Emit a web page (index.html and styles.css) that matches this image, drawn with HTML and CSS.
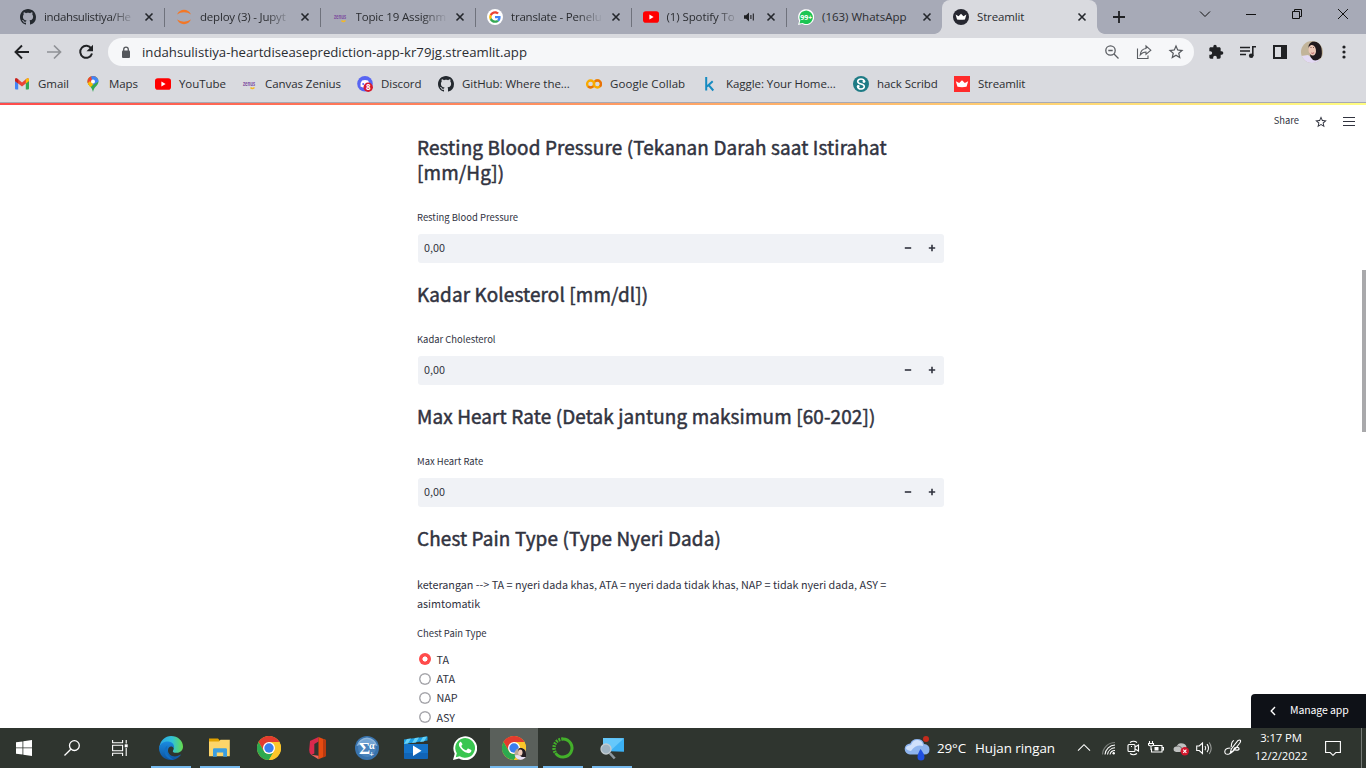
FILE: index.html
```html
<!DOCTYPE html>
<html lang="id">
<head>
<meta charset="utf-8">
<title>Streamlit</title>
<link rel="stylesheet" href="styles.css">
</head>
<body>
<svg class="defs" aria-hidden="true">
  <defs>
    <symbol id="github" viewBox="0 0 16 16"><path fill="#24292f" d="M8 0C3.58 0 0 3.58 0 8c0 3.54 2.29 6.53 5.47 7.59.4.07.55-.17.55-.38 0-.19-.01-.82-.01-1.49-2.01.37-2.53-.49-2.69-.94-.09-.23-.48-.94-.82-1.13-.28-.15-.68-.52-.01-.53.63-.01 1.08.58 1.23.82.72 1.21 1.87.87 2.33.66.07-.52.28-.87.51-1.07-1.78-.2-3.64-.89-3.64-3.95 0-.87.31-1.59.82-2.15-.08-.2-.36-1.02.08-2.12 0 0 .67-.21 2.2.82.64-.18 1.32-.27 2-.27s1.36.09 2 .27c1.53-1.04 2.2-.82 2.2-.82.44 1.1.16 1.92.08 2.12.51.56.82 1.27.82 2.15 0 3.07-1.87 3.75-3.65 3.95.29.25.54.73.54 1.48 0 1.07-.01 1.93-.01 2.2 0 .21.15.46.55.38A8.01 8.01 0 0 0 16 8c0-4.42-3.58-8-8-8z"/></symbol>
    <symbol id="zenius" viewBox="0 0 16 16"><text x="2" y="9.8" font-family="Open Sans, sans-serif" font-size="7.6" font-weight="700" textLength="12" lengthAdjust="spacingAndGlyphs" fill="#7d4f9f">zenus</text><path d="M9.500 11.500q1.700 2 4 0" fill="none" stroke="#f5b823" stroke-width="1.500"/></symbol>
    <symbol id="youtube" viewBox="0 0 16 16"><rect y="2.300" width="16" height="11.400" rx="2.800" fill="#f00"/><path d="M6.400 5.600v4.800L10.600 8z" fill="#fff"/></symbol>
    <symbol id="close" viewBox="0 0 10 10"><path d="M1.500 1.500l7 7M8.500 1.500l-7 7" stroke="#24272c" stroke-width="1.600" fill="none"/></symbol>
    <symbol id="crown" viewBox="0 0 16 16"><path d="M1.800 5.200L5.200 7 8 4.200 10.800 7l3.400-1.800-1.700 5.600q-4.500.9-9 0z"/></symbol>
    <symbol id="star" viewBox="0 0 24 24"><path d="M22 9.240l-7.190-.62L12 2 9.190 8.630 2 9.240l5.460 4.730L5.820 21 12 17.270 18.180 21l-1.630-7.030L22 9.240zM12 15.400l-3.760 2.270 1-4.280-3.320-2.880 4.380-.38L12 6.100l1.710 4.040 4.380.38-3.320 2.880 1 4.280L12 15.400z"/></symbol>
    <symbol id="chrome" viewBox="0 0 24 24"><circle cx="12" cy="12" r="12" fill="#fcc629"/><path d="M1.600 6A12 12 0 0 1 22.400 6H12l-5.200 9z" fill="#e33b2e"/><path d="M1.600 6l5.200 9c1 1.800 3 3 5.200 3 1.900 0 3.900-.8 5.200-3L12 24A12 12 0 0 1 1.600 6z" fill="#2da94f"/><path d="M12 24l5.200-9c1-2 1-4.200-.2-6.100L15.600 6h6.800A12 12 0 0 1 12 24z" fill="#fcc629"/><circle cx="12" cy="12" r="6" fill="#fff"/><circle cx="12" cy="12" r="4.700" fill="#3a7ded"/></symbol>
  </defs>
</svg>

<div class="browser">
  <div class="tabstrip">
    <div class="tabs">
      <div class="tab"><svg class="fav"><use href="#github"/></svg><span class="tab-title fade t-ind">indahsulistiya/He</span><svg class="x"><use href="#close"/></svg></div>
      <div class="tab"><svg class="fav" viewBox="0 0 16 16"><path d="M1 5.400Q3.500.8 8 .8T15 5.400Q12 3.300 8 3.300T1 5.400zM1 10.600Q3.500 15.200 8 15.200t7-4.600Q12 12.700 8 12.700T1 10.600z" fill="#f37726"/></svg><span class="tab-title fade t-dep">deploy (3) - Jupyt</span><svg class="x"><use href="#close"/></svg></div>
      <div class="tab"><svg class="fav"><use href="#zenius"/></svg><span class="tab-title fade t-top">Topic 19 Assignm</span><svg class="x"><use href="#close"/></svg></div>
      <div class="tab"><svg class="fav" viewBox="0 0 48 48"><circle cx="24" cy="24" r="24" fill="#fff"/><g transform="translate(6.500 6.500) scale(.73)"><path fill="#EA4335" d="M24 9.500c3.540 0 6.710 1.220 9.210 3.600l6.850-6.850C35.900 2.380 30.470 0 24 0 14.620 0 6.510 5.380 2.560 13.220l7.980 6.190C12.430 13.720 17.740 9.500 24 9.500z"/><path fill="#4285F4" d="M46.980 24.550c0-1.570-.15-3.090-.38-4.550H24v9.020h12.940c-.58 2.960-2.260 5.480-4.780 7.180l7.730 6c4.510-4.180 7.090-10.360 7.090-17.650z"/><path fill="#FBBC05" d="M10.530 28.590c-.48-1.450-.76-2.990-.76-4.590s.27-3.140.76-4.590l-7.980-6.190C.92 16.460 0 20.120 0 24c0 3.880.92 7.540 2.560 10.780l7.970-6.190z"/><path fill="#34A853" d="M24 48c6.480 0 11.930-2.130 15.890-5.810l-7.730-6c-2.150 1.450-4.920 2.300-8.160 2.300-6.260 0-11.570-4.220-13.470-9.910l-7.980 6.190C6.510 42.620 14.620 48 24 48z"/></g></svg><span class="tab-title fade t-tra">translate - Penelu</span><svg class="x"><use href="#close"/></svg></div>
      <div class="tab"><svg class="fav"><use href="#youtube"/></svg><span class="tab-title short fade">(1) Spotify To</span><svg class="speaker" viewBox="0 0 11 10"><path d="M0 3.200h2L5 .5v9L2 6.800H0z" fill="#202124"/><path d="M6.900 3v4M9.300 1.500v7" stroke="#202124" stroke-width="1.100" fill="none"/></svg><svg class="x"><use href="#close"/></svg></div>
      <div class="tab"><svg class="fav" viewBox="0 0 16 16"><path d="M0 16l1.100-4A8 8 0 1 1 4 15z" fill="#fff"/><path d="M1.500 14.500l.8-3A6.700 6.700 0 1 1 4.700 14z" fill="#1cc553"/><text x="2.200" y="10.800" font-family="Open Sans, sans-serif" font-weight="700" font-size="7.800" textLength="12" lengthAdjust="spacingAndGlyphs" fill="#fff">99+</text></svg><span class="tab-title">(163) WhatsApp</span><svg class="x"><use href="#close"/></svg></div>
      <div class="tab active"><svg class="fav" viewBox="0 0 16 16"><circle cx="8" cy="8" r="8" fill="#262730"/><use href="#crown" x="1" y="1" width="14" height="14" fill="#fff"/></svg><span class="tab-title t-str">Streamlit</span><svg class="x"><use href="#close"/></svg></div>
    </div>
    <svg class="newtab" viewBox="0 0 12 12"><path d="M6 0v12M0 6h12" stroke="#202124" stroke-width="1.800"/></svg>
    <div class="window-controls">
      <svg viewBox="0 0 12 12"><path d="M1 3.500l5 5 5-5" class="thin"/></svg>
      <svg viewBox="0 0 12 12"><path d="M1 6.500h10" class="thin"/></svg>
      <svg viewBox="0 0 12 12"><path d="M1.500 3.500h7v7h-7zM3.500 3V1.500h7v7H9" class="thin"/></svg>
      <svg viewBox="0 0 12 12"><path d="M1 1l10 10M11 1L1 11" class="thin"/></svg>
    </div>
  </div>

  <div class="toolbar">
    <div class="nav">
      <svg viewBox="0 0 16 16"><path d="M15 8H2.500M8 1.500L1.500 8 8 14.500" fill="none" stroke="#202124" stroke-width="1.900"/></svg>
      <svg viewBox="0 0 16 16"><path d="M1 8h12.500M8 1.500L14.500 8 8 14.500" fill="none" stroke="#8f9196" stroke-width="1.700"/></svg>
      <svg viewBox="0 0 16 16"><path d="M13.300 4.600A6 6 0 1 0 14 9.500" fill="none" stroke="#202124" stroke-width="2"/><path d="M15 .8v6.500H8.500z" fill="#202124"/></svg>
    </div>
    <div class="omnibox">
      <svg class="lock" viewBox="0 0 10 13"><rect x="1" y="4.500" width="8" height="7.500" rx="1" fill="#54575c"/><path d="M2.700 5V3.400a2.300 2.300 0 0 1 4.600 0V5" fill="none" stroke="#54575c" stroke-width="1.300"/></svg>
      <span class="url">indahsulistiya-heartdiseaseprediction-app-kr79jg.streamlit.app</span>
      <svg class="act" viewBox="0 0 16 16"><g fill="none" stroke="#5a5d62" stroke-width="1.300"><circle cx="6.500" cy="6.500" r="4.700"/><path d="M10 10l4.500 4.500M4.300 6.500h4.400"/></g></svg>
      <svg class="act" viewBox="0 0 16 16"><g fill="none" stroke="#5a5d62" stroke-width="1.100"><path d="M1.500 4.500v10h10.500v-3"/><path d="M10 2l4.800 4.200L10 10.300V8Q6.500 8 4.200 11 4.800 5 10 4.500z"/></g></svg>
      <svg class="act starbtn" fill="#54575c"><use href="#star"/></svg>
    </div>
    <div class="tools">
      <svg viewBox="0 0 24 24" fill="#202124"><path d="M20.500 11H19V7c0-1.100-.9-2-2-2h-4V3.500a2.500 2.500 0 0 0-5 0V5H4c-1.100 0-1.990.9-1.990 2v3.800H3.500c1.490 0 2.700 1.210 2.700 2.700s-1.210 2.700-2.700 2.700H2V20c0 1.100.9 2 2 2h3.800v-1.500c0-1.490 1.210-2.700 2.700-2.700s2.700 1.210 2.700 2.700V22H17c1.100 0 2-.9 2-2v-4h1.500a2.500 2.500 0 0 0 0-5z"/></svg>
      <svg viewBox="0 0 16 16"><path d="M0 3.500h10M0 7h10M0 10.500h6" stroke="#202124" stroke-width="1.500"/><path d="M12.800 12V2.700H16" fill="none" stroke="#202124" stroke-width="1.600"/><circle cx="11.200" cy="11.800" r="2.300" fill="#202124"/></svg>
      <svg viewBox="0 0 16 16"><path d="M1 1h14v14H1zM3 3v10h6V3z" fill="#202124" fill-rule="evenodd"/></svg>
      <svg class="avatar" viewBox="0 0 22 22"><defs><clipPath id="face"><circle cx="11" cy="11" r="11"/></clipPath></defs><g clip-path="url(#face)"><path fill="#c2b49a" d="M0 0h22v22H0z"/><path d="M0 15l7-1 7 5 8-1v4H0z" fill="#e3daf4"/><path d="M7.500 5Q9 0 14 .5q5 .5 6.500 7 1 6-.5 9-4 4-8 2.500L9.500 16z" fill="#20191d"/><ellipse cx="11.200" cy="9.300" rx="3.700" ry="5.400" transform="rotate(-10 11 9)" fill="#ecc6b6"/><path d="M9.500 6.500h1M12 6.500h1" stroke="#5a3a34" stroke-width=".8"/><path d="M10.300 12q1.700 1 2.800-.4" stroke="#b96064" fill="none"/></g></svg>
      <svg viewBox="0 0 16 16" fill="#202124"><circle cx="8" cy="3" r="1.600"/><circle cx="8" cy="8" r="1.600"/><circle cx="8" cy="13" r="1.600"/></svg>
    </div>
  </div>

  <div class="bookmarks">
    <div class="bm w71"><svg class="fav" viewBox="0 0 16 16"><path d="M1 3h3.200v10.500H2q-1 0-1-1z" fill="#4285f4"/><path d="M11.800 3H15v9.500q0 1-1 1h-2.200z" fill="#34a853"/><path d="M1 5V3.800q0-2.200 2.200-1.200L8 6.500l4.800-3.900q2.200-1 2.200 1.200V5L8 10.500z" fill="#ea4335"/><path d="M11.800 3.400l1.200-.8q2-.8 2 1.200V5l-3.200 2.500z" fill="#fbbc04"/><path d="M1 5V3.800q0-2 2-1.200l1.200.8v4.100z" fill="#c5221f"/></svg><span>Gmail</span></div>
    <div class="bm w70"><svg class="fav" viewBox="0 0 16 16"><defs><clipPath id="pin"><path d="M8 0a5.500 5.500 0 0 0-5.500 5.500C2.500 9.500 7 10.500 8 16c1-5.500 5.500-6.500 5.500-10.500A5.500 5.500 0 0 0 8 0z"/></clipPath></defs><g clip-path="url(#pin)"><path fill="#34a853" d="M0 0h16v16H0z"/><path d="M0 0h16L4 13H0z" fill="#fbbc04"/><path d="M0 0h12L2 10z" fill="#ea4335"/><path d="M6 0h10v4L8 9z" fill="#4285f4"/><path d="M0 10l5-5 2 3-3 4z" fill="#fbbc04"/></g><circle cx="8" cy="5.500" r="2" fill="#fff"/></svg><span>Maps</span></div>
    <div class="bm w86"><svg class="fav"><use href="#youtube"/></svg><span>YouTube</span></div>
    <div class="bm w116"><svg class="fav"><use href="#zenius"/></svg><span>Canvas Zenius</span></div>
    <div class="bm w81"><svg class="fav" viewBox="0 0 16 16"><circle cx="8" cy="7.800" r="7.800" fill="#5865f2"/><path d="M3.500 10.500q-.5-4 1.500-6 3-1 6 0 2 2 1.500 6l-3 1.200-3 0z" fill="#fff"/><circle cx="6.200" cy="8" r="1" fill="#5865f2"/><circle cx="11.200" cy="11.300" r="4.700" fill="#d7192d"/><text x="11.200" y="14.200" text-anchor="middle" font-size="8" font-weight="700" font-family="Open Sans, sans-serif" fill="#fff">8</text></svg><span>Discord</span></div>
    <div class="bm w148"><svg class="fav"><use href="#github"/></svg><span>GitHub: Where the...</span></div>
    <div class="bm w116"><svg class="fav" viewBox="0 0 16 16"><g fill="none" stroke-width="2.300"><circle cx="4.600" cy="8" r="3.500" stroke="#f9ab00"/><circle cx="11.400" cy="8" r="3.500" stroke="#f9ab00"/><path d="M2.200 10.400a3.500 3.500 0 0 0 5-.1M9 5.500a3.500 3.500 0 0 1 4.900 5" stroke="#e8710a"/></g></svg><span class="loose">Google Collab</span></div>
    <div class="bm w151"><svg class="fav" viewBox="0 0 16 16"><path d="M4.200 1v13.500M5 10.500L10.700 5.300M6.500 8.800l4.800 5.700" fill="none" stroke="#168bc1" stroke-width="2"/></svg><span>Kaggle: Your Home...</span></div>
    <div class="bm w101"><svg class="fav" viewBox="0 0 16 16"><circle cx="8" cy="8" r="8" fill="#1e7b85"/><path d="M11.300 5.500Q11 3 8 3T4.700 5.200c0 3.800 6.600 1.800 6.600 5.200 0 3-6 3.600-6.600.4" fill="none" stroke="#fff" stroke-width="1.600"/><circle cx="11" cy="5.600" r="1.400" fill="#fff"/><circle cx="5.200" cy="10.500" r="1.400" fill="#fff"/></svg><span>hack Scribd</span></div>
    <div class="bm"><svg class="fav" viewBox="0 0 16 16"><path fill="#ff2b2b" d="M0 0h16v16H0z"/><use href="#crown" width="16" height="16" fill="#fff"/></svg><span class="tight">Streamlit</span></div>
  </div>
</div>

<div class="page">
  <div class="decoration"></div>
  <div class="app-header"><span>Share</span><svg class="hstar" fill="#31333f"><use href="#star"/></svg><svg class="burger" viewBox="0 0 12 10"><path d="M0 1.500h12M0 5.500h12M0 9.500h12" stroke="#31333f"/></svg></div>
  <main class="content">
    <h3 class="h-rest">Resting Blood Pressure (Tekanan Darah saat Istirahat<br>[mm/Hg])</h3>
    <label class="lab">Resting Blood Pressure</label>
    <div class="number"><span>0,00</span><svg viewBox="0 0 8 8"><path d="M.8 4h6.400" class="bold"/></svg><svg viewBox="0 0 8 8"><path d="M.8 4h6.400M4 .8v6.400" class="bold"/></svg></div>
    <h3>Kadar Kolesterol [mm/dl])</h3>
    <label class="lab">Kadar Cholesterol</label>
    <div class="number"><span>0,00</span><svg viewBox="0 0 8 8"><path d="M.8 4h6.400" class="bold"/></svg><svg viewBox="0 0 8 8"><path d="M.8 4h6.400M4 .8v6.400" class="bold"/></svg></div>
    <h3>Max Heart Rate (Detak jantung maksimum [60-202])</h3>
    <label class="lab">Max Heart Rate</label>
    <div class="number"><span>0,00</span><svg viewBox="0 0 8 8"><path d="M.8 4h6.400" class="bold"/></svg><svg viewBox="0 0 8 8"><path d="M.8 4h6.400M4 .8v6.400" class="bold"/></svg></div>
    <h3 class="h-che">Chest Pain Type (Type Nyeri Dada)</h3>
    <p class="note">keterangan --&gt; TA = nyeri dada khas, ATA = nyeri dada tidak khas, NAP = tidak nyeri dada, ASY =<br>asimtomatik</p>
    <div class="lab rlab">Chest Pain Type</div>
    <div class="radios">
      <div class="radio on"><i></i><span>TA</span></div>
      <div class="radio"><i></i><span>ATA</span></div>
      <div class="radio"><i></i><span>NAP</span></div>
      <div class="radio"><i></i><span>ASY</span></div>
    </div>
  </main>
  <div class="scroll-thumb"></div>
  <div class="manage"><svg viewBox="0 0 6 10"><path d="M5 1L1.200 5 5 9" fill="none" stroke="#fff" stroke-width="1.400"/></svg><span>Manage app</span></div>
</div>

<div class="taskbar">
  <div class="cell"><svg class="i16" viewBox="0 0 16 16"><path fill="#fff" d="M0 2.300l6.500-.9v6.100H0zM7.300 1.300L16 0v7.500H7.300zM0 8.300h6.500v6.200L0 13.700zM7.300 8.300H16V16l-8.700-1.300z"/></svg></div>
  <div class="cell"><svg class="i16" viewBox="0 0 16 16"><g fill="none" stroke="#fff" stroke-width="1.300"><circle cx="10.400" cy="5.600" r="4.900"/><path d="M6.800 9.200L.5 15.500"/></g></svg></div>
  <div class="cell"><svg class="i16" viewBox="0 0 16 16"><g fill="none" stroke="#fff" stroke-width="1.100"><path d="M.6 0v2.700h10V0M.6 5.300h10v5.400H.6zM.6 16v-2.700h10V16M14.200 0v3.500M14.200 8v8"/></g><path fill="#fff" d="M12.700 4.300h3v3h-3z"/></svg></div>
  <div class="cell gap run"><svg class="i24" viewBox="0 0 24 24"><defs><linearGradient id="eg" x1="0" x2="1"><stop stop-color="#2ba6e5"/><stop offset=".55" stop-color="#32c3d5"/><stop offset="1" stop-color="#66dc4b"/></linearGradient><linearGradient id="eb" y2="1" x2="0"><stop stop-color="#1a8be0"/><stop offset="1" stop-color="#0e539f"/></linearGradient></defs><path d="M.4 11C1.500 4 6.300 0 12 0c7 0 12 5 12 10.500 0 4-3 6.300-6.500 6.300-3 0-4.300-1.200-3.400-2.400 1.600-2.200.4-6-4-6C6 8.400 2.600 10 .4 11z" fill="url(#eg)"/><path d="M0 12c.5-4 4.500-6.600 9-6.500 5 .1 6.600 4 6 6.700-2-3-6-2-6 2.300 0 4 4.600 7 9.500 5.500 1.500-.5 2.500-1.200 3.500-1.500C20 22 16 24 12 24 5 24 0 18.500 0 12z" fill="url(#eb)"/><path d="M8.500 9.500C6.500 15 9 21.500 15 23.600 6 24 2.500 13.500 8.500 9.500z" fill="#116fc5"/></svg></div>
  <div class="cell gap run"><svg class="i24" viewBox="0 0 24 24"><path d="M1 2.500h9l2 2.200V9H1z" fill="#e2a200"/><path d="M1 5.500h10l1.500-1.700h9.300v16.500H1z" fill="#fdd56a"/><path d="M5 20.800v-7.300q0-1.300 1.300-1.300h11.400q1.300 0 1.300 1.300v7.300h-3.800v-4.300H8.800v4.300z" fill="#3b9ee0"/></svg></div>
  <div class="cell gap"><svg class="i24"><use href="#chrome"/></svg></div>
  <div class="cell gap"><svg class="i24" viewBox="0 0 24 24"><path d="M4 5l8.500-4v4.500L8.300 8v9.500l-3 1.500Q3 17 3.200 14z" fill="#d9294d"/><path d="M12.500 1l7.500 3v16l-7.500 3.300z" fill="#e64b11"/><path d="M5.200 18.800l7.300.9v3.600z" fill="#f0645c"/><path d="M17 3v18.500l3-1.500V4z" fill="#b93a10"/></svg></div>
  <div class="cell gap"><svg class="i24" viewBox="0 0 24 24"><circle cx="12" cy="12" r="12" fill="#3973ad"/><path d="M1.500 10Q4 2 12 1.500 20 2 22.500 10 12 6 1.500 10z" fill="#8db5db"/><circle cx="12" cy="12" r="9" fill="#5b94cb" opacity=".5"/><g fill="#fff" font-family="Liberation Serif, serif" font-weight="700"><text x="4" y="18" font-size="17">Σ</text><text x="14" y="13" font-size="10">α</text><text x="14" y="21" font-size="9">+</text></g></svg></div>
  <div class="cell gap"><svg class="i24" viewBox="0 0 24 24"><path d="M0 8h24v13.500q0 1.500-1.500 1.500h-21Q0 23 0 21.500z" fill="#1473c9"/><path d="M0 3.500L23.500.5v4L0 8z" fill="#1ba1e8"/><path d="M3 3l4-.5-3 5-4 .5zM11 2l4-.5-3 5-4 .5zM19 1l4-.5-3 5-4 .5z" fill="#66d1f7"/><path d="M0 17h24v6H0z" fill="#0d5aaa" opacity=".6"/><path d="M9 9.500v10.500l8.500-5.200z" fill="#fff"/></svg></div>
  <div class="cell gap"><svg class="i24" viewBox="0 0 24 24"><path d="M0 24l1.700-6.200A11.900 11.900 0 1 1 6 22.400z" fill="#fff"/><path d="M2.800 21.200l1-3.900a9.900 9.900 0 1 1 3 3z" fill="#39c650"/><path fill="#fff" d="M8.400 6.400c-.3-.7-.9-.7-1.300-.4-1.400 1-1.500 2.900-.7 4.400 1.900 3.400 4.600 5.700 8.400 6.700 1.500.4 3.500-.8 3.600-2.300 0-.6 0-.8-.6-1.100l-2.200-1c-.5-.2-.8-.1-1.100.3l-.9 1.100c-.2.3-.5.3-.9.1-2-.8-3.300-2.100-4.200-3.800-.2-.3-.1-.5.1-.8l.7-.8c.2-.3.200-.6.1-.9z"/></svg></div>
  <div class="cell gap run current"><svg class="i24" viewBox="0 0 24 24"><use href="#chrome" width="24" height="24"/><defs><clipPath id="mini"><circle cx="18.500" cy="17.700" r="6"/></clipPath></defs><g clip-path="url(#mini)"><path fill="#bba995" d="M12 11h13v13H12z"/><path d="M16 15q1-4 4-3 4 1 4 6v3l-5 0z" fill="#241c20"/><ellipse cx="18.300" cy="16.500" rx="2.200" ry="3.100" fill="#f0cdbd"/><path d="M12 19.500l4-.5 4 2 4 0v4H12z" fill="#e8e0f4"/></g></svg></div>
  <div class="cell gap run"><svg class="i24" viewBox="0 0 24 24"><path d="M12 3a9 9 0 1 1-7.500 14" fill="none" stroke="#43b02a" stroke-width="3"/><path d="M12 3a9 9 0 0 0-7.500 14" fill="none" stroke="#43b02a" stroke-width="3.400" stroke-dasharray="1.800 1"/></svg></div>
  <div class="cell gap run"><svg class="i24" viewBox="0 0 24 24"><path d="M3 2l21 .3v13.500L3 15z" fill="#3cb1f4"/><path d="M3 2l21 .3L10 15.200 3 15z" fill="#66c8fb"/><circle cx="6" cy="13" r="5" fill="#9fb3c1" stroke="#c3cbd0" stroke-width="1.300"/><path d="M9.700 17l5 5.500" stroke="#8c979f" stroke-width="2.600"/></svg></div>
  <div class="tray">
    <svg class="weather" viewBox="0 0 26 26"><circle cx="22" cy="4" r="3" fill="#c42b1c"/><path d="M6 19.500a5.500 5.500 0 0 1 .3-11Q8 4 13 4q6 0 7 5 5.500.5 5.500 5.500t-5 5z" fill="#8eb4ee"/><path d="M7 10Q9 4.500 14 5q5 1 5 6Q12 9 7 16 2 15 2 13t5-3z" fill="#cfe0fb"/><path d="M16.500 14q4 5 4 8a3.500 3.500 0 0 1-7 0q0-3 3-8z" fill="#1f4fe0"/></svg>
    <span class="temp">29°C</span><span class="cond">Hujan ringan</span>
    <svg class="ti chev" viewBox="0 0 16 16"><path d="M2 10.700l6-6 6 6"/></svg>
    <svg class="ti wifi" viewBox="0 0 16 16"><path d="M4 14.500A10.500 10.500 0 0 1 14 5M6.500 14.500A8 8 0 0 1 14 7.800M9 14.500a5 5 0 0 1 5-4"/><path d="M1.500 14.500A12.500 12.500 0 0 1 14 2.500" opacity=".35"/><circle cx="12.700" cy="13.300" r="1.200" fill="#fff" stroke="none"/></svg>
    <svg class="ti cam" viewBox="0 0 16 16"><rect x="3" y="4.500" width="7" height="7" rx="1"/><path d="M10 7l3.500-2v6L10 9M5 2.500q3.500-2.500 7 0M5 13.500q3.500 2.500 7 0M6 6.500h1"/></svg>
    <svg class="ti bat" viewBox="0 0 16 16"><path d="M5.500 5.500H14v6.500H3.500V8.500M14.500 7.500h1v2.500h-1M1.500 1v2.500M4.500 1v2.500M.5 3.500h5v1.500q-2.500 2-5 0zM3 6.500v3.500"/><path d="M6.500 7h4v3.500h-4z" fill="#fff" stroke="none"/></svg>
    <svg class="ti od" viewBox="0 0 16 16"><path d="M1 11Q-.5 7 3.500 6.500 5.500 2 10 3.500 13 4 13.500 7L8 12H3z" fill="#bfc1c0" stroke="none"/><path d="M3.500 6.500q3-1.500 5.500 2" stroke="#777"/><circle cx="11.800" cy="11.200" r="4.200" fill="#d2162c" stroke="none"/><path d="M10.200 9.600l3.200 3.200M13.400 9.600l-3.200 3.200"/></svg>
    <svg class="ti vol" viewBox="0 0 16 16"><path d="M.7 6v4.500h2.500L6.500 13.500V3L3.200 6zM9 6q1.500 2 0 4.200M11 4.200q3 4 0 8"/><path d="M13.200 2.500q4 5.600 0 11.500" opacity=".5"/></svg>
    <svg class="ti pen" viewBox="0 0 18 18"><path d="M14 1.500q2-1 2.500 0t-1 3L9.500 12l-3 1 .8-3zM10 1.500Q7.500 2 7.200 8M6.500 9Q1 9 .8 12.500T5 15q4-1.500 5.500-6 4-1.500 4.500.5t-4 1.500"/></svg>
    <div class="clock"><span>3:17 PM</span><span>12/2/2022</span></div>
    <svg class="ti notif" viewBox="0 0 16 16"><path d="M.6 1.500h14.800v11h-4.600L8 15.300l-2.800-2.800H.6z"/></svg>
    <div class="showdesk"></div>
  </div>
</div>
</body>
</html>
```
FILE: styles.css
```css
* { box-sizing: border-box; }
body {
  margin: 0;
  width: 1366px;
  height: 768px;
  overflow: hidden;
  display: flex;
  flex-direction: column;
  background: #fff;
  color: #2b2d31;
  font-family: "Open Sans", "Noto Sans", sans-serif;
  font-size: 11.5px;
  white-space: nowrap;
}
svg { display: block; flex: none; }
.defs { position: absolute; width: 0; height: 0; }

/* Browser chrome */
.browser { height: 103px; background: #d9dadf; border-bottom: 1px solid #a7a9b4; flex: none; }
.tabstrip { display: flex; align-items: center; height: 34px; padding-left: 8.5px; background: #a7aab7; }
.tabs { display: grid; grid-template-columns: repeat(7, 155.5px); height: 34px; }
.tab { display: flex; align-items: center; height: 34px; padding-left: 12px; position: relative; }
.tab:first-child { padding-left: 11.5px; }
.tab.active { padding-left: 11.5px; }
.tab + .tab::before { content: ""; position: absolute; left: 0; top: 8px; width: 1px; height: 19px; background: #6f727c; }
.tab.active { background: #d9dadf; border-radius: 8px 8px 0 0; }
.tab + .tab.active::before { display: none; }
.tab.active::after {
  content: "";
  position: absolute;
  left: -8px;
  right: -8px;
  bottom: 0;
  height: 8px;
  background:
    radial-gradient(circle at 0 0, transparent 7.5px, #d9dadf 8.2px) left / 8px 8px no-repeat,
    radial-gradient(circle at 100% 0, transparent 7.5px, #d9dadf 8.2px) right / 8px 8px no-repeat;
}
.fav { width: 16px; height: 16px; }
.tab-title { width: 92px; margin-left: 8px; line-height: 18px; }
.tab-title.short { width: 71px; letter-spacing: -.1px; }
.t-ind { letter-spacing: -.35px; }
.t-dep { letter-spacing: -.2px; }
.t-top { letter-spacing: -.15px; }
.t-tra { letter-spacing: -.2px; }
.t-str { letter-spacing: -.15px; }
.fade { -webkit-mask-image: linear-gradient(90deg, #000 72%, transparent 100%); mask-image: linear-gradient(90deg, #000 72%, transparent 100%); }
.speaker { width: 11px; height: 10px; margin-left: 6px; }
.x { width: 10px; height: 10px; margin-left: 7.5px; }
.speaker + .x { margin-left: 11.5px; }
.newtab { width: 12px; height: 12px; margin-left: 16px; }
.window-controls { display: flex; gap: 34px; margin-left: auto; margin-right: 17px; margin-bottom: 6px; }
.window-controls svg { width: 12px; height: 12px; }
.thin { fill: none; stroke: #111; stroke-width: 1; }

.toolbar { display: flex; align-items: center; height: 36px; }
.nav { display: flex; gap: 16px; margin-left: 14px; }
.nav svg { width: 16px; height: 16px; }
.omnibox { display: flex; align-items: center; width: 1086px; height: 28px; margin-left: 14px; padding: 0 10px 0 12px; border-radius: 14px; background: #f6f7f9; }
.lock { width: 10px; height: 13px; margin: 0 11px 0 1px; }
.url { margin-right: auto; font-size: 13.2px; }
.act { width: 16px; height: 16px; margin-left: 16px; }
.act.starbtn { width: 18px; height: 18px; margin: 0 -1px 0 15px; }
.tools { display: flex; align-items: center; gap: 16px; margin-left: 14px; }
.tools svg { width: 16px; height: 16px; }
.tools .avatar { width: 22px; height: 22px; margin: 0 -3px; }

.bookmarks { display: flex; height: 28px; padding-left: 14px; }
.bm { display: flex; align-items: center; gap: 8px; }
.bm span { padding-bottom: 2px; letter-spacing: -.06px; }
.bm .loose { letter-spacing: .08px; }
.bm .tight { letter-spacing: -.15px; }
.w71 { width: 71px; }
.w70 { width: 70px; }
.w86 { width: 86px; }
.w116 { width: 116px; }
.w81 { width: 81px; }
.w148 { width: 148px; }
.w151 { width: 151px; }
.w101 { width: 101px; }

/* Streamlit page */
.page { position: relative; flex: 1; overflow: hidden; background: #fff; color: #31333f; font-family: "Noto Sans CJK SC", sans-serif; }
.decoration { height: 2px; background: linear-gradient(90deg, #ff4b4b, #fffd80); }
.app-header { position: absolute; top: 9px; right: 11.5px; display: flex; align-items: center; height: 18px; font-size: 9.4px; }
.app-header span { padding-bottom: 2px; }
.hstar { width: 14px; height: 14px; margin: 2px 15px 0 14.5px; }
.burger { width: 12px; height: 10px; }
.content { width: 527px; margin-left: 417px; padding-top: 29px; }
h3 { margin: 0 0 26px; font-size: 18.9px; line-height: 25.2px; font-weight: 400; letter-spacing: .135px; -webkit-text-stroke: .5px #31333f; height: 25px; }
h3.h-rest { height: 50px; }
h3.h-che { margin-bottom: 25px; }
.lab { display: block; height: 14px; line-height: 14px; font-size: 9.45px; }
.number { display: flex; align-items: center; height: 29px; margin: 10px 0 18px 1px; padding: 0 8px 0 6px; border-radius: 3px; background: #f0f2f6; font-size: 10.8px; }
.number span { margin-right: auto; padding-bottom: 3px; }
.number svg { width: 8px; height: 8px; margin: 0 0 1px 16px; }
.bold { stroke: #31333f; stroke-width: 1.6; fill: none; }
.note { margin: 0; font-size: 10.8px; line-height: 19.2px; height: 38px; letter-spacing: -.02px; }
.rlab { margin-top: 13px; }
.radios { display: flex; flex-direction: column; margin-top: 9.5px; }
.radio { display: flex; align-items: center; height: 19.2px; padding-left: 2px; font-size: 10.8px; }
.radio i { width: 12px; height: 12px; margin: 1px 5.5px 0 0; border-radius: 50%; background: radial-gradient(circle, transparent 4.2px, #a9a9ae 4.8px); }
.radio.on i { margin-top: 0; background: radial-gradient(circle, #fff 2.2px, #ff4b4b 2.9px); }
.scroll-thumb { position: absolute; right: 0; top: 167px; width: 4px; height: 162px; background: #a9a9ab; }
.manage { position: absolute; right: 0; bottom: 0; display: flex; align-items: center; width: 115px; height: 34px; padding-left: 19px; gap: 14px; border-radius: 4px 0 0 0; background: #0e1117; color: #fff; font-size: 10.5px; }
.manage span { padding-bottom: 3px; letter-spacing: -.1px; }
.manage svg { width: 6px; height: 10px; }

/* Taskbar */
.taskbar { display: flex; height: 40px; flex: none; background: #2f352f; color: #fff; }
.cell { width: 48px; height: 40px; display: flex; align-items: center; justify-content: center; }
.cell.gap { margin-left: 1px; }
.cell:nth-child(4) { margin-left: 3px; }
.i16 { width: 16px; height: 16px; }
.i24 { width: 24px; height: 24px; }
.run { background: linear-gradient(#76b9ed, #76b9ed) 50% 100% / 40px 2px no-repeat; }
.run.current { background: linear-gradient(#76b9ed, #76b9ed) 50% 100% / 48px 2px no-repeat, #5a605b; }
.tray { display: flex; align-items: center; margin-left: auto; font-size: 13.4px; }
.weather { width: 26px; height: 26px; }
.temp { width: 38px; margin-left: 7px; letter-spacing: -.1px; }
.cond { width: 79px; letter-spacing: -.05px; }
.ti { width: 16px; height: 16px; fill: none; stroke: #fff; stroke-width: 1.1; }
.chev { margin-left: 22px; }
.wifi { margin-left: 9px; }
.cam { margin-left: 8px; }
.bat { margin-left: 7px; }
.od { margin-left: 9px; }
.vol { margin-left: 7px; }
.pen { width: 18px; height: 18px; margin-left: 12px; }
.clock { display: flex; flex-direction: column; align-items: center; width: 60px; margin-left: 9px; font-size: 11.3px; line-height: 18px; padding-bottom: 2px; letter-spacing: -.1px; }
.notif { margin-left: 14px; }
.showdesk { width: 5px; height: 40px; margin-left: 20px; border-left: 1px solid #757a76; }
```
